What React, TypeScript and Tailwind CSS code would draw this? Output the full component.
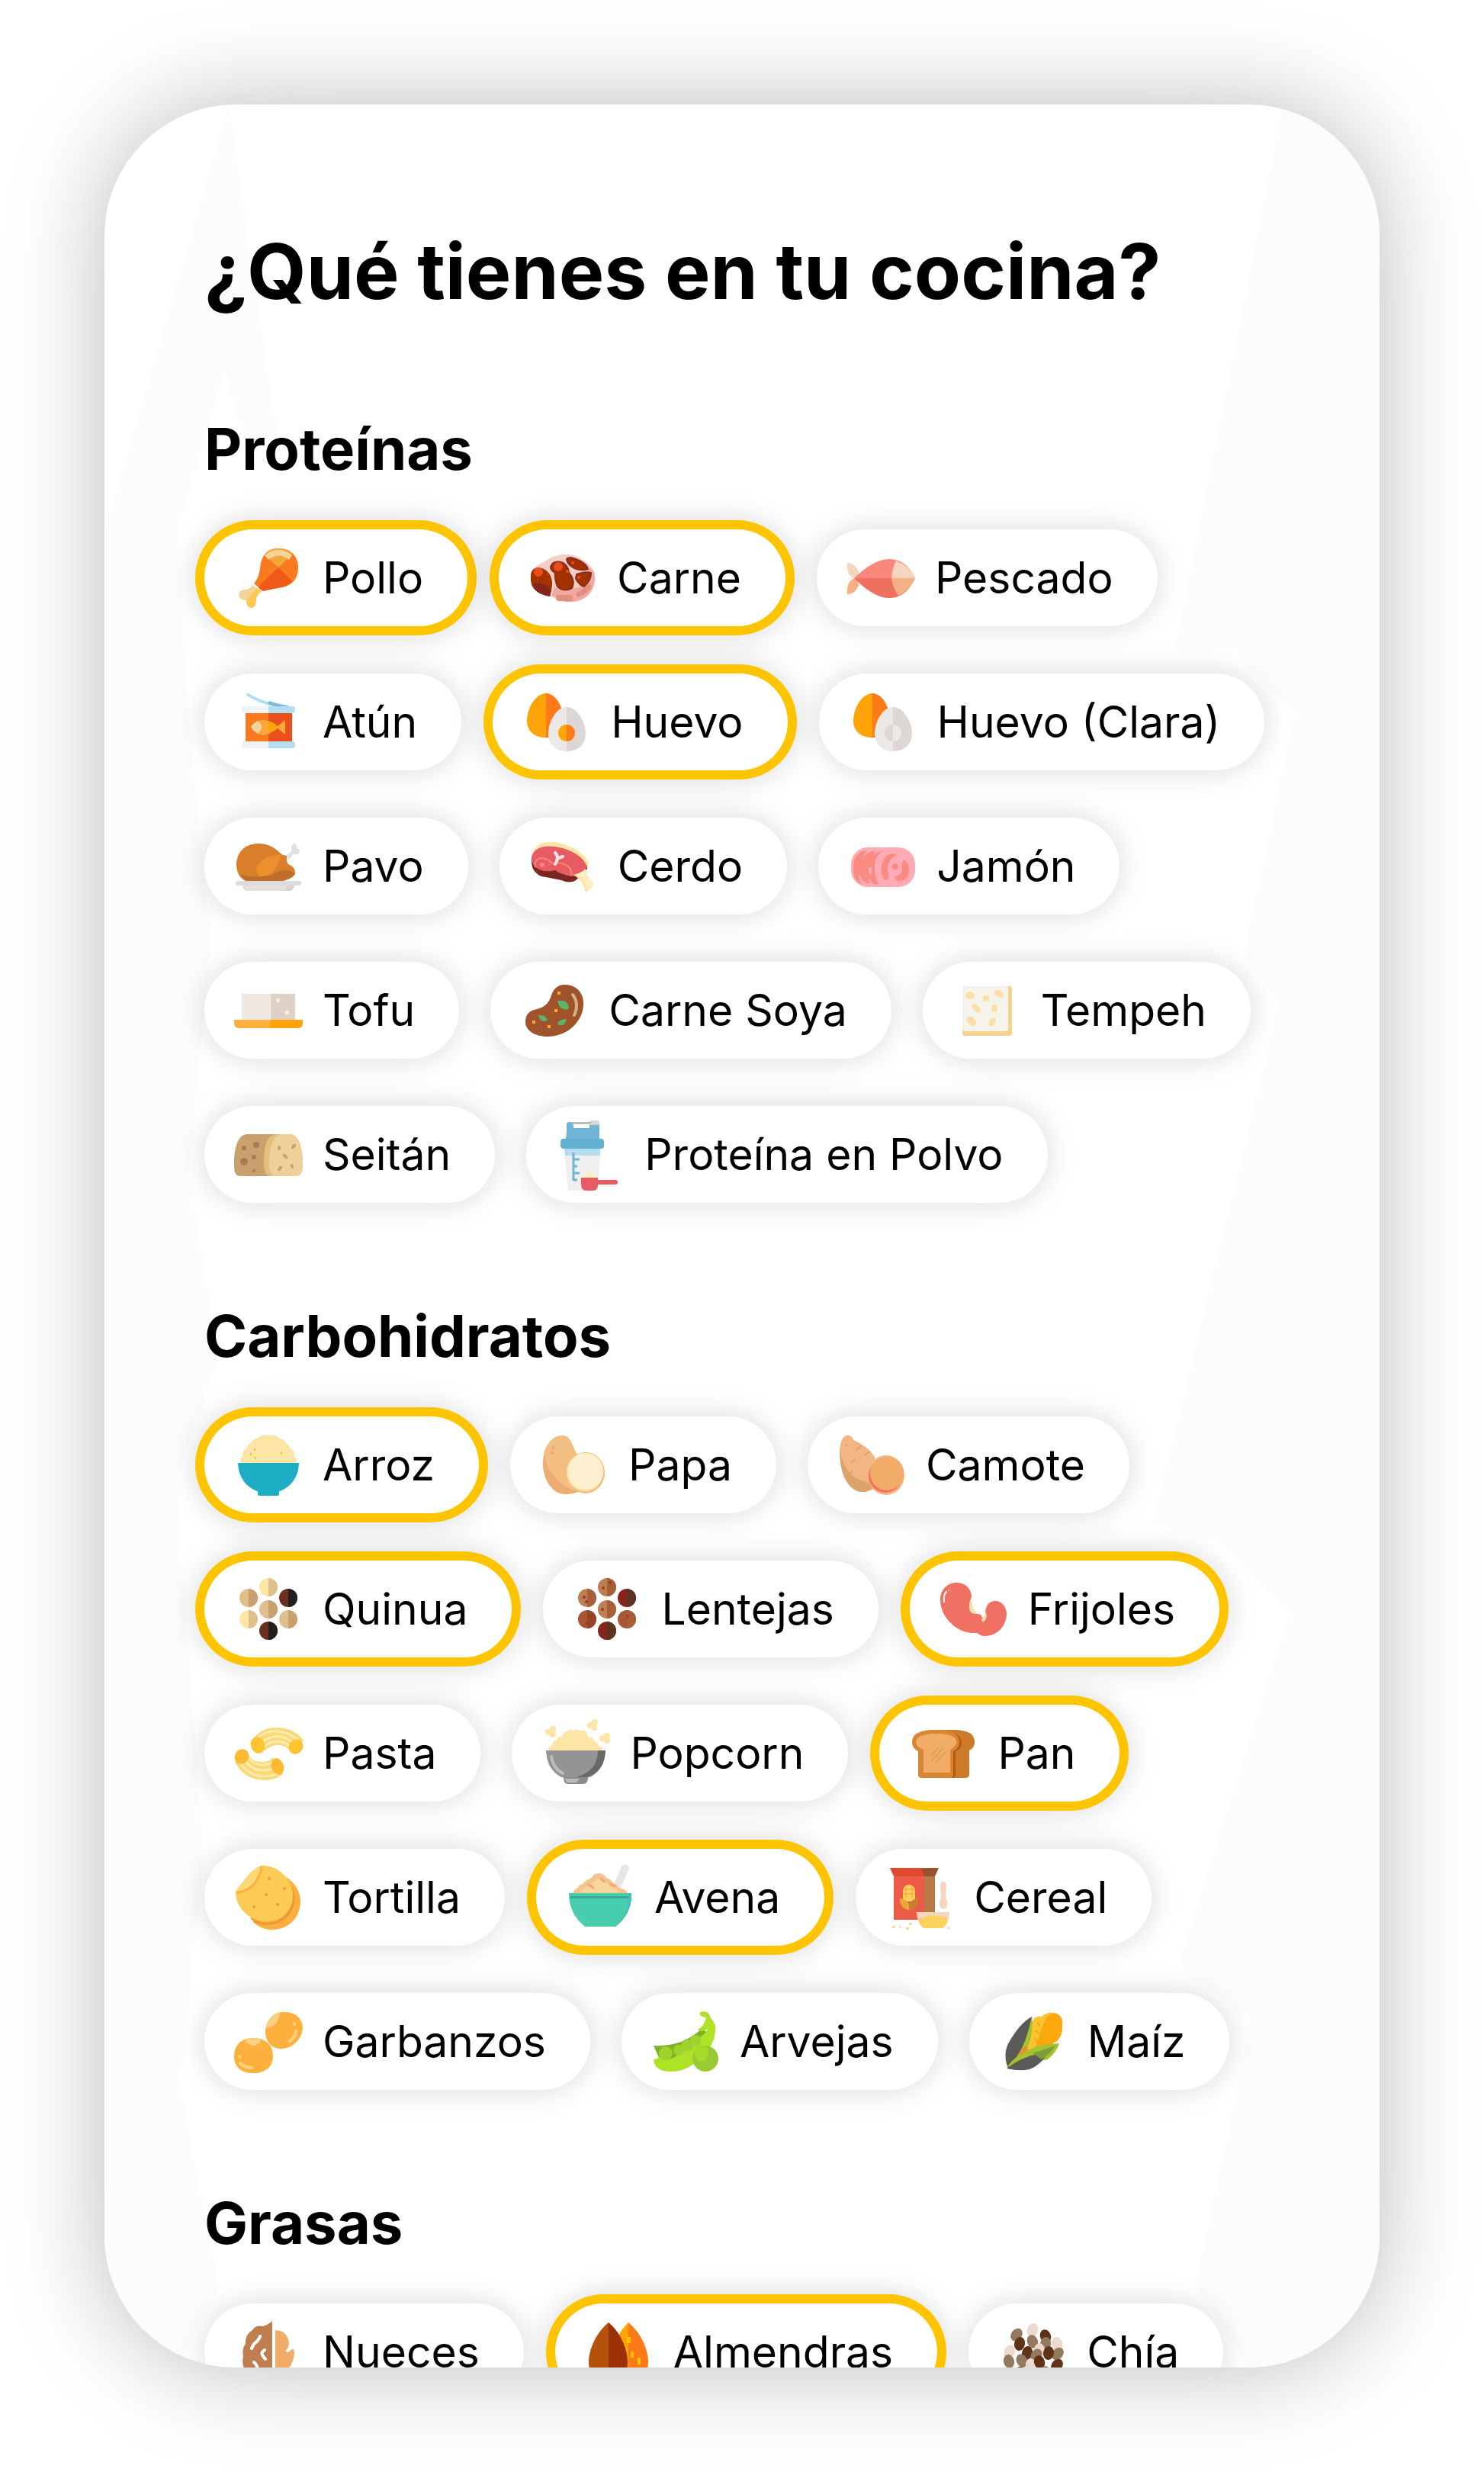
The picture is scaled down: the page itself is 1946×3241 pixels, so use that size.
import React, { useState } from 'react';

interface Ingredient {
  name: string;
  icon: React.ReactNode;
}

interface Section {
  title: string;
  items: Ingredient[];
}

const drumstick = (
  <>
    <path d="M25 54 L34 62 Q28 68 28 76 Q28 84 22 84 Q16 83 16 74 Q8 75 6 67 Q7 60 14 60 Q20 60 25 54Z" fill="#f2d59b" />
    <path d="M30 58 L36 62 Q28 68 29 76 Q28 84 22 84 Q16 83 16 74Z" fill="#fcc850" />
    <path d="M40 14 Q46 6 58 6 C76 6 84 18 84 30 C84 45 78 54 62 57 Q50 59 38 62 L26 52 Q33 44 34 32 Q35 20 40 14Z" fill="#f97a1f" />
    <path d="M58 31 L76 49 Q70 56 62 57 Q50 59 38 62 L31 57Z" fill="#f05a18" />
    <path d="M58 31 L40 14 Q46 6 58 6 Q70 6 76 14Z" fill="#f7a63c" />
    <path d="M40 15 Q58 1 76 15 L72 21 Q58 10 45 21Z" fill="#f2d59b" />
  </>
);

const beef = (
  <>
    <path d="M3 42 C3 32 12 28 25 21 C38 12 58 12 70 20 C82 27 90 38 87 50 C84 66 74 76 52 76 C40 76 34 69 22 67 C8 63 3 55 3 42Z" fill="#f5cfc3" />
    <path d="M34 56 Q44 66 58 58 Q72 58 87 44 C86 66 72 77 52 76 C42 76 36 70 31 68Z" fill="#f3a9a0" />
    <path d="M72 42 L76 36 Q82 28 86 38 Q88 46 85 54Z" fill="#f3a9a0" />
    <path d="M3 42 C3 32 12 29 20 33 C30 38 33 50 30 60 L28 69 C12 66 3 58 3 47Z" fill="#a43200" />
    <path d="M4 52 Q22 50 30 60 L28 69 Q8 66 4 52Z" fill="#86241c" />
    <path d="M29 30 Q32 22 43 24 Q52 27 53 38 Q62 48 57 58 Q46 64 38 56 Q34 46 35 38 Q29 35 29 30Z" fill="#a43200" stroke="#8a2a20" strokeWidth="2" />
    <path d="M50 20 Q52 16 62 20 Q76 25 78 33 Q70 36 60 32 Q51 27 50 20Z" fill="#a43200" stroke="#8a2a20" strokeWidth="2" />
    <path d="M63 40 Q72 36 82 38 Q82 48 73 56 Q66 54 62 45Z" fill="#a43200" stroke="#8a2a20" strokeWidth="2" />
    <circle cx="13" cy="37" r="6" fill="#e84e1c" />
    <circle cx="39" cy="30" r="6" fill="#e84e1c" />
    <circle cx="58" cy="25" r="2" fill="#e84e1c" />
    <circle cx="66" cy="44" r="2" fill="#e84e1c" />
    <circle cx="51" cy="36" r="2" fill="#e84e1c" />
    <circle cx="12" cy="47" r="1" fill="#e84e1c" />
    <circle cx="25" cy="40" r="1" fill="#e84e1c" />
    <rect x="36" y="67" width="22" height="8" rx="4" fill="#e0907f" />
    <path d="M66 66 Q74 63 79 56" stroke="#e0907f" strokeWidth="7" strokeLinecap="round" fill="none" />
  </>
);

const fish = (
  <>
    <path d="M1 25 Q10 24 16 36 Q17 41 10 45 Q0 42 1 25Z" fill="#f6d5bf" />
    <path d="M1 66 Q10 67 16 55 Q17 50 10 45 Q0 49 1 66Z" fill="#f5b083" />
    <path d="M10 45 Q36 20 56 20 Q78 20 90 45Z" fill="#f9877c" />
    <path d="M10 45 Q36 71 56 71 Q78 71 90 45Z" fill="#f0705f" />
    <path d="M65 22 Q83 29 90 45 H59 Q60 32 65 22Z" fill="#f6d5bf" />
    <path d="M68 68 Q83 61 90 45 H59 Q61 58 68 68Z" fill="#f5b083" />
  </>
);

const tunaCan = (
  <>
    <path d="M18 9 Q42 23 70 25" stroke="#b4ddf2" strokeWidth="4" strokeLinecap="round" fill="none" />
    <path d="M45 19 Q56 23 70 25" stroke="#7db8d8" strokeWidth="4" fill="none" />
    <rect x="15" y="32" width="61" height="39" fill="#f97a1f" />
    <rect x="45" y="32" width="31" height="39" fill="#ea4f1e" />
    <rect x="10" y="24" width="70" height="9" rx="4" fill="#b4ddf2" />
    <path d="M45 24 H14 Q10 24 10 28 Q10 33 14 33 H45Z" fill="#f0f4f8" />
    <rect x="10" y="70" width="70" height="9" rx="4" fill="#b4ddf2" />
    <path d="M45 70 H14 Q10 70 10 74 Q10 79 14 79 H45Z" fill="#f0f4f8" />
    <path d="M30 44 Q40 38 57 50 L67 42 V61 L57 53 Q40 66 30 59Z" fill="#fba838" />
    <path d="M45 43 Q52 45 57 50 L45 61Z" fill="#ffa408" />
    <path d="M31 43 Q41 51 31 60 Q25 57 22 51 Q25 46 31 43Z" fill="#f2d59b" />
  </>
);

const egg = (
  <>
    <path d="M31 7 C17 7 6 27 6 43 C6 57 16 65 31 65Z" fill="#ffa408" />
    <path d="M31 7 C45 7 54 27 54 43 C54 57 45 65 31 65Z" fill="#fd7a18" />
    <path d="M58 25 C44 25 34 45 34 60 C34 74 44 83 58 83Z" fill="#ece8e6" />
    <path d="M58 25 C72 25 83 45 83 60 C83 74 72 83 58 83Z" fill="#dcd7d4" />
  </>
);

const wholeEgg = (
  <>
    {egg}
    <path d="M58 48 A11 11 0 0 0 58 70Z" fill="#ffa408" />
    <path d="M58 48 A11 11 0 0 1 58 70Z" fill="#fd7a18" />
  </>
);

const eggWhite = (
  <>
    {egg}
    <path d="M58 48 A11 11 0 0 0 58 70Z" fill="#dcd7d4" />
    <path d="M58 48 A11 11 0 0 1 58 70Z" fill="#ece8e6" />
  </>
);

const turkey = (
  <>
    <path d="M67 32 L76 24 Q73 16 79 15 Q83 16 82 21 Q88 23 85 28 Q81 31 78 28 L72 36Z" fill="#e0e0e0" />
    <path d="M32 15 C50 15 58 26 64 30 L69 31 Q68 38 71 42 Q81 46 80 54 Q78 61 60 65 H18 C6 62 3 50 3 42 C4 24 16 15 32 15Z" fill="#d97f2b" />
    <path d="M29 52 C29 38 42 30 62 30 Q56 50 46 56 Q34 62 29 52Z" fill="#ee8f2e" />
    <path d="M8 55 Q30 63 54 54 Q66 46 80 54 Q78 61 60 65 H18 Q11 61 8 55Z" fill="#b9692a" opacity="0.8" />
    <path d="M10 68 H80 L77 75 Q76 77 73 77 H17 Q14 77 13 75Z" fill="#d7d3d1" />
    <path d="M12 70 H70 L66 77 H17 Q14 77 12 70Z" fill="#e3e0e0" />
    <rect x="2" y="64" width="86" height="6" rx="3" fill="#dddbdb" />
  </>
);

const pork = (
  <>
    <path d="M3 36 Q2 52 16 58 Q28 60 42 63 Q58 70 66 58 L76 48 V38Z" fill="#7a2621" />
    <path d="M3 30 C8 14 22 11 34 13 C54 16 72 28 77 38 V44 L70 46Z" fill="#fde5a5" />
    <path d="M3 33 C6 20 20 17 34 19 C54 22 72 32 76 46 Q66 58 56 58 Q42 56 34 50 Q18 54 8 46 Q2 40 3 33Z" fill="#e65c62" />
    <path d="M8 46 Q6 34 18 34 Q26 36 30 41 Q44 38 52 46 Q56 50 55 57" stroke="#f9877c" strokeWidth="2" fill="none" />
    <circle cx="17" cy="43" r="3" fill="#f9877c" />
    <circle cx="26" cy="43" r="1" fill="#f9877c" />
    <path d="M34 27 Q40 33 34 42 M38 34 L44 32" stroke="#f4e9e6" strokeWidth="4" strokeLinecap="round" fill="none" />
    <path d="M58 56 Q68 54 74 48 Q75 58 85 66 Q85 74 74 79 Q70 62 58 56Z" fill="#fdeec8" />
    <path d="M58 56 L64 55 Q73 62 77 76 L74 79 Q70 62 58 56Z" fill="#fde5a5" />
  </>
);

const ham = (
  <>
    <rect x="4" y="20" width="84" height="52" rx="22" fill="#ffaab4" />
    <path d="M24 24 Q8 26 7 46 Q7 64 17 68 Q12 54 16 57 Q19 66 28 68 L27 60 L33 68 L40 69 Q34 58 35 44 Q36 30 45 25 Q38 25 33 31 L36 25 Q26 25 19 34Z" fill="#f98b83" />
    <path d="M64 29 Q46 26 44 46 Q43 62 51 63 Q56 60 52 52 Q50 38 64 29Z" fill="#f98b83" />
    <path d="M73 36 Q69 42 71 50 Q68 58 62 58 Q60 63 68 64 Q80 62 80 50 Q80 40 73 36Z" fill="#f98b83" />
    <circle cx="62" cy="45" r="4" fill="#f98b83" />
    <rect x="27" y="46" width="4" height="9" rx="1" fill="#ffaab4" />
  </>
);

const tofu = (
  <>
    <rect x="10" y="23" width="38" height="34" fill="#efe8e2" />
    <rect x="48" y="23" width="32" height="34" fill="#dfd1c5" />
    <rect x="55" y="29" width="5" height="5" fill="#f4f0ec" />
    <rect x="67" y="45" width="5" height="5" fill="#f4f0ec" />
    <path d="M0 57 H48 V68 H6 Q0 68 0 61Z" fill="#fdb13c" />
    <path d="M48 57 H90 V61 Q90 68 84 68 H48Z" fill="#ffa408" />
  </>
);

const soyMeat = (
  <>
    <path d="M58 11 C76 11 84 24 83 38 C82 58 64 79 36 79 C18 79 7 70 7 60 C7 50 12 45 22 43 C34 40 38 34 41 25 C44 16 50 11 58 11Z" fill="#a0522b" />
    <path d="M69 24 Q78 36 71 51" stroke="#d3b183" strokeWidth="4" strokeLinecap="round" fill="none" />
    <path d="M49 32 Q64 30 64 43 Q51 46 49 32Z" fill="#5cb369" />
    <path d="M24 51 Q34 50 36 58 Q26 62 24 51Z" fill="#5cb369" />
    <path d="M61 56 Q50 56 49 63 Q58 68 61 56Z" fill="#5cb369" />
    <rect x="49" y="20" width="4" height="4" fill="#fba838" />
    <rect x="45" y="43" width="4" height="4" fill="#fba838" />
    <rect x="16" y="58" width="4" height="4" fill="#fba838" />
    <rect x="36" y="64" width="4" height="4" fill="#fba838" />
  </>
);

const tempeh = (
  <>
    <rect x="13" y="13" width="65" height="65" rx="3" fill="#f6d48d" />
    <rect x="13" y="13" width="60" height="59" rx="3" fill="#f6f3ec" />
    <g fill="#fadfa6">
      <ellipse cx="23" cy="25" rx="6" ry="5" />
      <ellipse cx="44" cy="29" rx="4" ry="4" />
      <ellipse cx="61" cy="23" rx="7" ry="4" transform="rotate(30 61 23)" />
      <ellipse cx="31" cy="42" rx="7" ry="4" transform="rotate(45 31 42)" />
      <ellipse cx="55" cy="42" rx="4" ry="5" />
      <ellipse cx="25" cy="59" rx="7" ry="5" transform="rotate(40 25 59)" />
      <ellipse cx="52" cy="60" rx="6" ry="4" transform="rotate(-60 52 60)" />
    </g>
  </>
);

const seitan = (
  <>
    <path d="M16 18 H62 V73 H8 Q0 73 0 60 V50 Q2 20 16 18Z" fill="#c9a16f" />
    <path d="M54 18 H74 Q88 20 90 52 V60 Q90 73 80 73 H46 Q38 70 39 50 Q40 20 54 18Z" fill="#e3bf7c" />
    <path d="M60 18 H74 Q88 20 90 52 V60 Q90 73 80 73 H52 Q44 66 46 50 Q48 22 60 18Z" fill="#edd09a" />
    <g fill="#a87c53">
      <circle cx="29" cy="32" r="4" />
      <circle cx="13" cy="36" r="3" />
      <circle cx="26" cy="48" r="3" />
      <circle cx="13" cy="54" r="5" />
      <circle cx="26" cy="66" r="2" />
    </g>
    <g fill="#c9a16f">
      <ellipse cx="59" cy="36" rx="2" ry="3" />
      <ellipse cx="78" cy="34" rx="2" ry="4" transform="rotate(40 78 34)" />
      <ellipse cx="67" cy="47" rx="2" ry="4" transform="rotate(-40 67 47)" />
      <ellipse cx="60" cy="63" rx="2" ry="4" transform="rotate(40 60 63)" />
      <ellipse cx="76" cy="60" rx="2" ry="3" transform="rotate(-30 76 60)" />
    </g>
  </>
);

const shaker = (
  <>
    <path d="M11 44 H58 L55 90 Q55 92 52 92 H19 Q16 92 16 90Z" fill="#efefef" />
    <path d="M11 35 H58 V46 H12Z" fill="#b4ddf2" />
    <rect x="44" y="0" width="13" height="10" rx="3" fill="#dbd7d4" />
    <rect x="20" y="2" width="26" height="3" fill="#bdbdbd" />
    <path d="M14 6 Q14 2 18 2 Q23 2 23 8 Q23 10 26 10 H44 V6 H57 V26 H12 Q14 20 14 14Z" fill="#6fb5d8" />
    <rect x="6" y="24" width="57" height="13" rx="4" fill="#63b1d2" />
    <path d="M23 42 V79 M23 51 H31 M23 60 H28 M23 69 H31 M23 78 H28" stroke="#6fb5d8" strokeWidth="3" fill="none" />
    <path d="M35 76 Q37 70 44 66 Q50 70 54 76Z" fill="#fdeec8" />
    <path d="M33 75 H55 V78 H78 Q81 78 81 81 Q81 84 78 84 H55 Q55 92 48 92 H40 Q33 92 33 84Z" fill="#e65c62" />
  </>
);

const rice = (
  <>
    <path d="M9 42 Q7 36 11 33 Q11 26 16 23 Q17 17 23 15 Q26 9 32 9 Q36 4 41 6 Q45 4 49 6 Q55 4 58 9 Q64 10 67 15 Q72 18 74 23 Q79 26 79 33 Q83 36 81 42Z" fill="#fde5a5" />
    <g fill="#f8c421">
      <rect x="26" y="23" width="2" height="3" />
      <rect x="21" y="29" width="2" height="3" />
      <rect x="27" y="34" width="2" height="3" />
      <rect x="61" y="28" width="2" height="3" />
    </g>
    <path d="M5 42 H85 Q84 70 58 80 H32 Q6 70 5 42Z" fill="#1cacc3" />
    <rect x="31" y="79" width="28" height="6" rx="2" fill="#1cacc3" />
  </>
);

const potato = (
  <>
    <path d="M30 6 C42 6 42 22 50 32 L58 74 C50 82 42 83 34 83 C14 83 4 60 4 43 C4 22 14 6 30 6Z" fill="#f3be82" />
    <path d="M6 30 Q10 66 50 80 Q42 83 34 83 C14 83 4 60 4 43Z" fill="#ecac72" />
    <circle cx="17" cy="22" r="2" fill="#f0a873" />
    <circle cx="16" cy="29" r="2" fill="#f0a873" />
    <ellipse cx="60" cy="55" rx="25" ry="27" fill="#f3be82" />
    <ellipse cx="59" cy="54" rx="24" ry="25" fill="#fde5a5" />
    <ellipse cx="60" cy="53" rx="23" ry="24" fill="#fcf0d1" />
  </>
);

const sweetPotato = (
  <>
    <path d="M13 6 Q19 5 21 12 Q40 20 49 34 L48 76 Q40 80 33 80 C14 80 3 50 3 30 C3 18 6 6 13 6Z" fill="#f3b581" />
    <path d="M4 28 Q10 62 42 68 L46 76 Q40 80 33 80 C12 80 2 50 4 28Z" fill="#dba46c" />
    <path d="M24 26 L31 20 M36 32 L42 27 M18 42 L24 37 M14 60 L20 52 M10 20 L13 18" stroke="#dba46c" strokeWidth="2" />
    <ellipse cx="64" cy="58" rx="24" ry="26" fill="#f3b581" />
    <ellipse cx="63" cy="59" rx="22" ry="22" fill="#f0715f" />
    <ellipse cx="65" cy="56" rx="22" ry="22" fill="#f1ac68" />
  </>
);

const seedSpots = [
  { x: 45, y: 16 },
  { x: 19, y: 30 },
  { x: 71, y: 30 },
  { x: 45, y: 45 },
  { x: 19, y: 58 },
  { x: 71, y: 58 },
  { x: 45, y: 73 },
];

function Seeds({ colors }: { colors: [string, string][] }) {
  return (
    <>
      {seedSpots.map((spot, i) => (
        <g key={i}>
          <circle cx={spot.x} cy={spot.y} r="12" fill={colors[i][0]} />
          <path d={`M${spot.x} ${spot.y - 12} a12 12 0 0 1 0 24Z`} fill={colors[i][1]} />
        </g>
      ))}
    </>
  );
}

const quinoa = (
  <Seeds
    colors={[
      ['#fde5a5', '#dfbf8b'],
      ['#dfbf8b', '#c9a16f'],
      ['#6b2f1d', '#231f1d'],
      ['#dfbf8b', '#c9a16f'],
      ['#fde5a5', '#dfbf8b'],
      ['#dfbf8b', '#c9a16f'],
      ['#6b2f1d', '#231f1d'],
    ]}
  />
);

const lentils = (
  <>
    <Seeds
      colors={[
        ['#bd7f53', '#a65f38'],
        ['#bd7f53', '#a65f38'],
        ['#86241c', '#5c341f'],
        ['#bd7f53', '#a65f38'],
        ['#a85638', '#96432a'],
        ['#a85638', '#a65f38'],
        ['#86241c', '#5c341f'],
      ]}
    />
    <g fill="#a03a22">
      <circle cx="49" cy="10" r="2" />
      <circle cx="40" cy="17" r="2" />
      <circle cx="15" cy="29" r="2" />
      <circle cx="18" cy="35" r="2" />
      <circle cx="39" cy="45" r="2" />
      <circle cx="24" cy="55" r="3" />
      <circle cx="18" cy="63" r="2" />
      <circle cx="72" cy="54" r="2" />
    </g>
  </>
);

const beans = (
  <>
    <path d="M22 10 C36 10 42 20 42 29 C36 40 42 50 54 52 L62 66 L60 76 H42 C20 74 1 54 1 32 C1 20 10 10 22 10Z" fill="#f07063" />
    <path d="M73 34 C82 34 88 42 88 51 C88 66 76 80 60 80 Q52 80 48 74 L54 56 Q60 58 60 48 Q62 34 73 34Z" fill="#f07063" />
    <path d="M42 30 Q43 44 49 51 Q39 52 39 42 Q39 34 42 30Z M60 47 Q65 56 57 62 L55 58 Q60 54 60 47Z" fill="#f5e0b5" />
    <path d="M6 35 Q5 26 9 22" stroke="#fff" strokeWidth="2" strokeLinecap="round" fill="none" />
    <circle cx="12" cy="20" r="1" fill="#fff" />
  </>
);

const pasta = (
  <>
    <path d="M26 24 Q38 10 56 11 Q80 12 91 28 L76 44 Q68 33 56 34 Q48 34 40 42Z" fill="#f9d977" />
    <path d="M30 25 Q46 11 68 18 Q80 23 86 30 M36 31 Q54 17 70 26 Q76 29 80 34 M38 36 Q54 25 68 32 L76 38" stroke="#fdeaae" strokeWidth="3" fill="none" />
    <ellipse cx="31" cy="34" rx="9" ry="11" fill="#fdc42f" transform="rotate(-20 31 34)" />
    <ellipse cx="81" cy="36" rx="9" ry="10" fill="#fdc42f" transform="rotate(35 81 36)" />
    <path d="M1 56 L18 46 Q24 56 36 56 Q46 56 51 50 L64 72 Q52 81 38 80 Q12 78 1 56Z" fill="#f9d977" />
    <path d="M7 56 Q18 74 38 75 Q50 75 60 70 M13 53 Q24 68 40 67 Q48 67 55 63 M18 50 Q28 61 40 60 L50 57" stroke="#fdeaae" strokeWidth="3" fill="none" />
    <ellipse cx="10" cy="49" rx="9" ry="10" fill="#fdb92f" transform="rotate(35 10 49)" />
    <ellipse cx="57" cy="62" rx="8" ry="11" fill="#fdb92f" transform="rotate(-20 57 62)" />
  </>
);

const popcorn = (
  <>
    <path d="M9 42 Q9 35 15 34 Q14 28 20 27 Q22 22 28 23 Q27 17 34 16 Q37 12 42 15 Q46 12 50 15 Q58 13 60 20 Q62 24 62 24 Q68 22 69 29 Q75 30 74 35 Q81 36 80 42Z" fill="#fde5a5" />
    <g fill="#fde5a5">
      <circle cx="9" cy="17" r="4" />
      <circle cx="15" cy="13" r="4" />
      <circle cx="15" cy="20" r="4" />
      <circle cx="64" cy="8" r="4" />
      <circle cx="70" cy="4" r="4" />
      <circle cx="69" cy="11" r="4" />
      <circle cx="80" cy="25" r="4" />
      <circle cx="86" cy="22" r="4" />
      <circle cx="86" cy="28" r="4" />
    </g>
    <path d="M28 74 H62 L60 82 Q58 85 54 85 H36 Q31 85 30 82Z" fill="#8c8c8c" />
    <path d="M6 41 H84 Q83 66 64 76 H26 Q7 66 6 41Z" fill="#949494" />
    <path d="M74 41 H84 Q83 68 60 76 H46 Q74 68 74 41Z" fill="#686868" />
    <path d="M30 78 H50 L46 83 H34Z" fill="#bcbcbc" />
    <path d="M13 49 Q15 64 28 71" stroke="#bcbcbc" strokeWidth="4" strokeLinecap="round" fill="none" />
  </>
);

const bread = (
  <>
    <path d="M26 14 H62 Q86 15 86 30 Q86 38 79 41 V72 Q79 77 74 77 H46 V14Z" fill="#cd7a2a" />
    <path d="M42 14 Q68 16 69 31 Q69 38 61 42 V72 Q61 77 55 77 H40Z" fill="#b8560f" />
    <path d="M30 14 H40 Q66 14 66 31 Q66 38 58 42 V72 Q58 77 53 77 H16 Q12 77 12 72 V42 Q4 38 4 30 Q4 15 30 14Z" fill="#d98632" />
    <path d="M30 19 H40 Q62 20 62 30 Q62 36 54 40 V70 H19 V40 Q9 36 9 31 Q9 20 30 19Z" fill="#f1ac68" />
    <path d="M30 47 L38 38 M30 54 L44 39 M36 56 L47 44" stroke="#dfa050" strokeWidth="2" strokeLinecap="round" />
  </>
);

const tortilla = (
  <>
    <path d="M68 18 C84 28 87 42 87 50 C87 72 70 87 50 87 C36 87 26 80 22 72Z" fill="#fdb13c" />
    <path d="M74 30 Q84 50 70 68 Q52 86 26 76" stroke="#e99b3a" strokeWidth="3" fill="none" />
    <path d="M76 38 Q80 58 64 72 Q46 86 22 72" stroke="#e99b3a" strokeWidth="2" fill="none" />
    <path d="M38 3 C60 3 77 24 77 42 C77 62 62 76 42 76 C20 76 2 58 2 38 Q22 10 38 3Z" fill="#fccb55" />
    <path d="M2 40 Q32 38 38 3 Q32 3 22 13 Q4 32 2 40Z" fill="#fdb13c" />
    <path d="M2 37 Q30 34 35 3 Q22 8 12 24 Q3 34 2 37Z" fill="#f9d977" />
    <g fill="#e99b3a">
      <circle cx="46" cy="20" r="2" />
      <circle cx="66" cy="33" r="2" />
      <circle cx="42" cy="41" r="2" />
      <circle cx="57" cy="54" r="2" />
      <circle cx="26" cy="57" r="2" />
    </g>
  </>
);

const oats = (
  <>
    <path d="M64 26 L73 4 Q76 0 80 2 Q84 4 82 9 L72 32Z" fill="#e9e5e4" />
    <path d="M10 39 Q10 34 15 33 Q17 28 22 27 Q26 22 30 21 Q35 18 37 15 Q44 11 50 15 Q53 20 58 21 Q61 26 66 27 Q70 33 76 34 Q81 36 80 39Z" fill="#f6c390" />
    <path d="M16 39 L44 18 L72 39Z" fill="#f7d69b" />
    <path d="M30 28 L36 32 M46 20 L50 24 M58 27 L64 30" stroke="#f0a873" strokeWidth="3" strokeLinecap="round" />
    <path d="M4 39 H86 Q87 66 65 83 H25 Q4 66 4 39Z" fill="#48ceae" />
    <path d="M86 39 Q87 66 65 83 Q84 64 82 39Z" fill="#44bfc0" />
    <rect x="6" y="43" width="76" height="3" fill="#37a99a" />
  </>
);

const cereal = (
  <>
    <rect x="11" y="16" width="41" height="58" fill="#ec5a48" />
    <rect x="51" y="16" width="14" height="58" fill="#b97a45" />
    <path d="M6 6 H48 L52 17 H11Z" fill="#df4a2c" />
    <path d="M47 6 H70 L65 17 H51Z" fill="#99522e" />
    <path d="M23 50 V38 Q23 28 31 28 Q39 28 39 38 V50Z" fill="#fcd15e" />
    <path d="M23 34 H39 M23 40 H39 M27 30 V46 M35 30 V46" stroke="#efa538" strokeWidth="1" />
    <path d="M19 46 Q28 46 31 54 Q36 46 43 46 Q43 60 31 61 Q19 60 19 46Z" fill="#efa538" />
    <path d="M31 54 Q36 46 43 46 Q43 60 31 61Z" fill="#c47f30" />
    <path d="M72 30 Q72 24 76 24 Q80 24 80 30 L79 46 Q82 50 81 54 Q80 60 76 60 Q72 60 71 54 Q70 50 73 46Z" fill="#f6d5bf" />
    <path d="M41 64 H84 Q84 78 75 85 H50 Q41 78 41 64Z" fill="#f6d5bf" />
    <path d="M43 74 Q46 70 50 72 Q54 67 58 70 Q62 66 66 70 Q71 67 74 71 Q79 69 82 73 Q80 82 75 85 H50 Q45 80 43 74Z" fill="#fcd15e" />
    <path d="M9 82 h4 v3 h-4Z M18 81 l3 2 l-2 3Z M27 84 h4 v3 h-4Z M31 78 h4 v3 h-4Z M81 82 l4 3 l-2 2Z" fill="#fcd88a" />
  </>
);

const chickpeas = (
  <>
    <path d="M64 6 C80 5 90 14 90 28 C88 42 76 54 62 54 C48 54 41 44 41 32 C42 18 50 6 64 6Z" fill="#fdb13c" />
    <path d="M42 27 Q58 26 60 6 Q46 10 42 27Z" fill="#fad083" />
    <path d="M81 31 Q80 40 73 44 M79 21 V22" stroke="#fdd27d" strokeWidth="4" strokeLinecap="round" fill="none" />
    <path d="M25 40 C42 40 51 50 51 64 C51 78 41 86 25 86 C9 86 0 78 0 64 C0 50 9 40 25 40Z" fill="#fdb13c" />
    <path d="M14 43 Q25 57 36 43 Q25 37 14 43Z" fill="#fad083" />
    <path d="M8 73 Q14 79 23 79 M7 64 V65" stroke="#fdd27d" strokeWidth="4" strokeLinecap="round" fill="none" />
  </>
);

const peas = (
  <>
    <path d="M3 50 Q40 52 66 28 L76 34 Q74 50 52 68 L12 70Z" fill="#7fb02c" />
    <path d="M64 6 Q76 3 78 14 Q86 22 84 32 Q82 50 68 62 Q50 84 26 84 Q4 84 3 68 Q9 68 10 64 Q20 72 32 64 L62 40 Q70 36 74 28 Q66 34 61 29 Q70 24 72 13 Q66 12 64 10Z" fill="#ade227" />
    <g fill="#9fd32c">
      <circle cx="19" cy="60" r="9" />
      <circle cx="36" cy="56" r="7" />
      <circle cx="47" cy="50" r="8" />
      <circle cx="58" cy="43" r="7" />
    </g>
    <ellipse cx="71" cy="67" rx="17" ry="17" fill="#98ca33" />
    <ellipse cx="66" cy="60" rx="9" ry="11" fill="#a6da2a" />
  </>
);

const corn = (
  <>
    <path d="M44 18 Q48 10 56 12 Q62 6 72 7 Q84 10 83 22 Q84 36 76 44 L52 60 L30 72 Q38 40 44 18Z" fill="#fdc42f" />
    <path d="M62 14 Q68 6 76 8 Q84 12 83 22 Q84 36 76 44 L46 60 Q52 34 62 14Z" fill="#fda80c" />
    <path d="M50 20 L54 24 M48 30 L53 34 M46 40 L51 44 M58 22 L62 26 M56 36 L60 40" stroke="#f3a912" strokeWidth="2" />
    <path d="M43 12 Q46 36 28 64 L12 80 Q4 60 14 44 Q28 20 43 12Z" fill="#5a5a58" />
    <path d="M43 12 Q46 38 34 60 L12 80 Q28 60 34 44 Q40 28 43 12Z" fill="#a6c22f" />
    <path d="M10 78 Q34 48 79 47 Q76 58 64 68 L24 76Z" fill="#a6c22f" />
    <path d="M10 80 Q36 60 64 60 Q54 76 40 81 Q28 84 10 80Z" fill="#5a5a58" />
    <path d="M44 60 L74 50 Q66 62 56 68Z" fill="#7f9c3a" />
    <path d="M24 64 Q28 56 36 50 L38 56Z" fill="#f28a34" />
  </>
);

const walnut = (
  <>
    <path d="M50 4 V88 H30 Q12 82 13 66 Q10 58 12 50 Q10 40 15 34 Q14 22 24 16 Q28 9 38 11 Q46 8 50 4Z" fill="#bf7e50" />
    <path d="M54 16 Q66 16 70 26 Q74 32 70 40 Q76 36 79 44 Q79 52 76 58 Q74 66 66 68 Q62 82 54 84Z" fill="#f1ac68" />
    <path d="M34 24 Q32 30 26 34 L23 40 M40 42 Q34 46 38 50 L41 54 M26 58 Q31 62 31 70 M77 38 L70 43" stroke="#fff" strokeWidth="4" strokeLinecap="round" fill="none" />
  </>
);

const almond = (
  <>
    <path d="M57 6 C44 18 34 40 34 58 C34 76 46 86 57 86Z" fill="#ffa408" />
    <path d="M57 6 C72 18 83 40 83 58 C83 76 70 86 57 86Z" fill="#fd7a18" />
    <path d="M55 25 h5 v8 h-5Z M60 44 h4 v8 h-4Z M69 52 h4 v9 h-4Z M60 66 h4 v8 h-4Z" fill="#ffc400" />
    <path d="M31 6 C16 18 5 40 5 58 C5 76 16 86 31 86Z" fill="#b4520b" />
    <path d="M31 6 C46 18 56 40 56 58 C56 76 46 86 31 86Z" fill="#9c3006" />
  </>
);

const chiaSeeds = [
  { x: 24, y: 22, r: 40, fill: '#93795e' },
  { x: 45, y: 16, r: 20, fill: '#ecd9d0' },
  { x: 62, y: 24, r: -20, fill: '#5f3318' },
  { x: 28, y: 34, r: 15, fill: '#5f3318' },
  { x: 45, y: 31, r: -20, fill: '#93795e' },
  { x: 62, y: 34, r: 10, fill: '#93795e' },
  { x: 77, y: 34, r: -15, fill: '#ecd9d0' },
  { x: 15, y: 44, r: 30, fill: '#ecd9d0' },
  { x: 38, y: 46, r: 15, fill: '#5f3318' },
  { x: 54, y: 42, r: 0, fill: '#ecd9d0' },
  { x: 50, y: 49, r: 30, fill: '#93795e' },
  { x: 78, y: 47, r: 40, fill: '#93795e' },
  { x: 66, y: 46, r: 10, fill: '#5f3318' },
  { x: 14, y: 57, r: -15, fill: '#93795e' },
  { x: 31, y: 56, r: -25, fill: '#93795e' },
  { x: 43, y: 62, r: -10, fill: '#ecd9d0' },
  { x: 54, y: 58, r: -15, fill: '#5f3318' },
  { x: 77, y: 62, r: 40, fill: '#5f3318' },
  { x: 27, y: 72, r: 40, fill: '#5f3318' },
  { x: 62, y: 72, r: -10, fill: '#93795e' },
];

const chia = (
  <>
    {chiaSeeds.map((seed, i) => (
      <ellipse key={i} cx={seed.x} cy={seed.y} rx="7" ry="9" fill={seed.fill} transform={`rotate(${seed.r} ${seed.x} ${seed.y})`} />
    ))}
  </>
);

const sections: Section[] = [
  {
    title: 'Proteínas',
    items: [
      { name: 'Pollo', icon: drumstick },
      { name: 'Carne', icon: beef },
      { name: 'Pescado', icon: fish },
      { name: 'Atún', icon: tunaCan },
      { name: 'Huevo', icon: wholeEgg },
      { name: 'Huevo (Clara)', icon: eggWhite },
      { name: 'Pavo', icon: turkey },
      { name: 'Cerdo', icon: pork },
      { name: 'Jamón', icon: ham },
      { name: 'Tofu', icon: tofu },
      { name: 'Carne Soya', icon: soyMeat },
      { name: 'Tempeh', icon: tempeh },
      { name: 'Seitán', icon: seitan },
      { name: 'Proteína en Polvo', icon: shaker },
    ],
  },
  {
    title: 'Carbohidratos',
    items: [
      { name: 'Arroz', icon: rice },
      { name: 'Papa', icon: potato },
      { name: 'Camote', icon: sweetPotato },
      { name: 'Quinua', icon: quinoa },
      { name: 'Lentejas', icon: lentils },
      { name: 'Frijoles', icon: beans },
      { name: 'Pasta', icon: pasta },
      { name: 'Popcorn', icon: popcorn },
      { name: 'Pan', icon: bread },
      { name: 'Tortilla', icon: tortilla },
      { name: 'Avena', icon: oats },
      { name: 'Cereal', icon: cereal },
      { name: 'Garbanzos', icon: chickpeas },
      { name: 'Arvejas', icon: peas },
      { name: 'Maíz', icon: corn },
    ],
  },
  {
    title: 'Grasas',
    items: [
      { name: 'Nueces', icon: walnut },
      { name: 'Almendras', icon: almond },
      { name: 'Chía', icon: chia },
    ],
  },
];

const initialSelection = ['Pollo', 'Carne', 'Huevo', 'Arroz', 'Quinua', 'Frijoles', 'Pan', 'Avena', 'Almendras'];

function Chip({ item, selected, onToggle }: { item: Ingredient; selected: boolean; onToggle: () => void }) {
  return (
    <button
      type="button"
      aria-pressed={selected}
      onClick={onToggle}
      className={`flex h-[127px] items-center gap-[26px] rounded-full bg-white pl-[39px] pr-[58px] text-[57px] leading-[64px] whitespace-nowrap text-black ${
        selected
          ? 'shadow-[0_0_0_12px_#ffc400,0_0_42px_12px_rgba(0,0,0,0.15)]'
          : 'shadow-[0_0_42px_rgba(0,0,0,0.15)]'
      }`}
    >
      <svg viewBox="0 0 90 90" className="h-[90px] w-[90px] shrink-0 overflow-visible" aria-hidden="true">
        {item.icon}
      </svg>
      <span>{item.name}</span>
    </button>
  );
}

export default function App() {
  const [selected, setSelected] = useState<string[]>(initialSelection);

  const toggle = (name: string) => {
    setSelected(selected.includes(name) ? selected.filter(n => n !== name) : [...selected, name]);
  };

  return (
    <div className="h-screen bg-white p-[137px]" style={{ fontFamily: 'Inter, "Liberation Sans", sans-serif' }}>
      <main className="relative h-full overflow-hidden rounded-[172px] bg-white shadow-[0_0_130px_rgba(0,0,0,0.27)]">
        {/* Faint facets behind the list */}
        <svg
          viewBox="0 0 1672 2967"
          preserveAspectRatio="none"
          className="absolute inset-0 h-full w-full"
          aria-hidden="true"
        >
          <path
            d="M163 0 L228 440 H182 L157 350 L132 440 L95 560 L110 800 L140 1100 L110 1400 L150 1640 L95 1800 L130 2300 L100 2600 L150 2860 L95 2967 H0 V560Z"
            fill="#fcfcfc"
          />
          <path
            d="M1545 0 L1403 713 H1480 L1560 800 L1495 1110 L1540 1180 L1374 1860 L1460 1880 L1553 1980 L1408 2440 L1505 2510 L1430 2860 L1500 2967 H1672 V0Z"
            fill="#fcfcfc"
          />
        </svg>

        <div className="relative h-full overflow-y-auto pt-[161px] pr-[110px] pl-[131px] [scrollbar-width:none]">
          <h1 className="text-[100px] leading-[116px] font-bold text-black">¿Qué tienes en tu cocina?</h1>
          {sections.map((section) => (
            <section key={section.title} className="pt-[134px]">
              <h2 className="mb-[66px] text-[76px] leading-[80px] font-bold text-black">{section.title}</h2>
              <div className="flex flex-wrap gap-x-[41px] gap-y-[62px]">
                {section.items.map((item) => (
                  <Chip
                    key={item.name}
                    item={item}
                    selected={selected.includes(item.name)}
                    onToggle={() => toggle(item.name)}
                  />
                ))}
              </div>
            </section>
          ))}
        </div>
      </main>
    </div>
  );
}
